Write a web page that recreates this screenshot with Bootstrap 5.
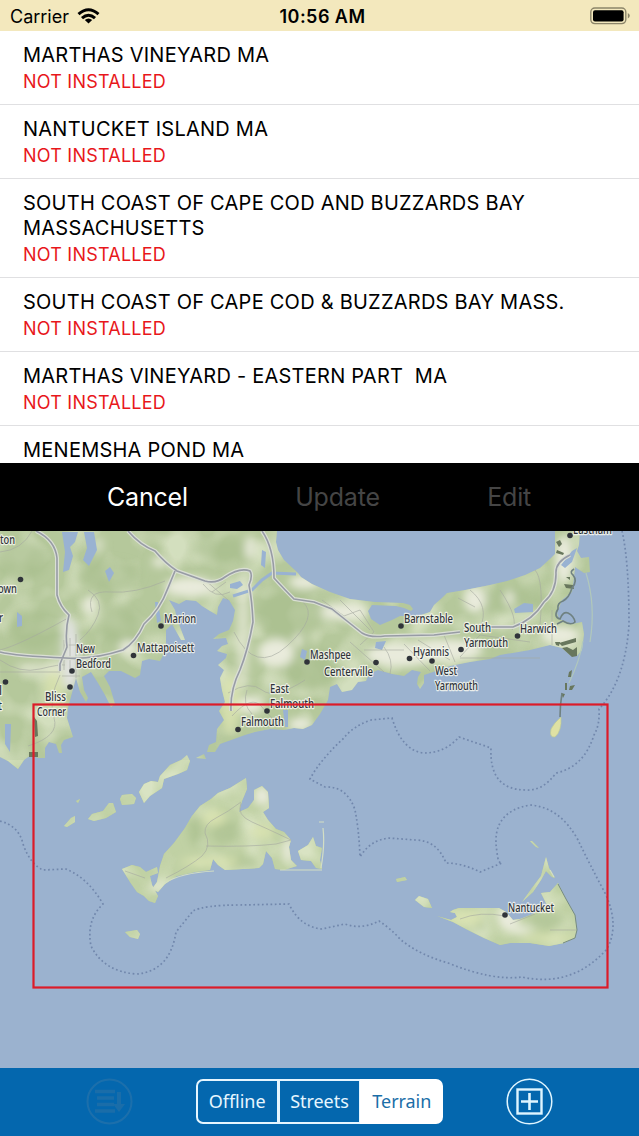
<!DOCTYPE html>
<html lang="en">
<head>
    <meta charset="utf-8">
    <meta name="viewport" content="width=device-width, initial-scale=1">
    <title>Chart Download</title>
    <link href="https://cdn.jsdelivr.net/npm/bootstrap@5.3.3/dist/css/bootstrap.min.css" rel="stylesheet">
    <style>
        body {
            font-family: Inter, "Liberation Sans", sans-serif;
            color: #000;
        }
        .screen {
            width: 639px;
            height: 1136px;
        }
        .status-bar {
            height: 31px;
            background: #f3e8bd;
            font-size: 18px;
            line-height: 31px;
            padding: 1px 8px 0 10px;
        }
        .status-bar > * {
            flex: 1 1 0;
        }
        .clock {
            font-weight: 600;
            letter-spacing: .45px;
            padding-left: 4px;
        }
        .chart-list {
            height: 432px;
        }
        .chart-list .list-group-item {
            padding: 12px 0 9px 23px;
            border-color: #e0e0e2;
            border-width: 0 0 1px;
            color: #000;
            flex-shrink: 0;
        }
        .chart-name {
            font-size: 20px;
            line-height: 25px;
            letter-spacing: .24px;
            white-space: pre;
        }
        .chart-state {
            font-size: 18px;
            line-height: 27px;
            letter-spacing: .22px;
            color: #e8171b;
        }
        .action-bar {
            height: 68px;
            background: #000;
            padding: 2px 108px 0 107px;
        }
        .action-bar .btn {
            font-size: 25px;
            letter-spacing: -.2px;
            border: 0;
            padding: 0;
            color: #fff;
        }
        .action-bar .btn:disabled {
            color: #454545;
            opacity: 1;
        }
        .map-view {
            height: 537px;
            background: #9bb2cf;
        }
        .map-view text {
            font-family: "Noto Sans", sans-serif;
            font-size: 13px;
            font-weight: 500;
            fill: #30343a;
            stroke: #f6f7ef;
            stroke-opacity: .85;
            stroke-width: 2.6px;
            stroke-linejoin: round;
            paint-order: stroke;
        }
        .tool-bar {
            height: 68px;
            background: #0467ae;
            padding: 0 86px 2px;
        }
        .layer-switch {
            width: 248px;
            height: 45px;
        }
        .layer-switch .btn {
            font-family: "Noto Sans", sans-serif;
            font-size: 18px;
            letter-spacing: -.05px;
            padding: 0;
            line-height: 39px;
            color: #e6f6ff;
            border: 2px solid #e6f6ff;
            border-radius: 7px;
            flex: 1 1 0;
        }
        .layer-switch .btn:not(:first-child) {
            margin-left: -2px;
        }
        .layer-switch .btn.active {
            background: #fff;
            border-color: #fff;
            color: #1b6ea8;
        }
    </style>
</head>
<body>
    <div class="screen d-flex flex-column overflow-hidden">
        <!-- Status bar -->
        <div class="status-bar d-flex">
            <div class="d-flex align-items-center">
                <span>Carrier</span>
                <svg class="ms-2" width="23" height="17" viewBox="0 0 23 17">
                    <g fill="none" stroke="#000" stroke-width="3">
                        <path d="M1.5 6.2 Q11.5 -2.6 21.5 6.2"/>
                        <path d="M5 10.2 Q11.5 4.2 18 10.2"/>
                    </g>
                    <path d="M11.5 15.6 L7.8 12.1 Q11.5 9 15.2 12.1 Z"/>
                </svg>
            </div>
            <div class="clock text-center">10:56 AM</div>
            <div class="d-flex justify-content-end align-items-center">
                <svg width="41" height="18" viewBox="0 0 41 18">
                    <rect x=".8" y="1" width="35" height="15.6" rx="4" fill="none" stroke="#8c8569" stroke-width="1.4"/>
                    <rect x="3" y="3.2" width="30.6" height="11.4" rx="2"/>
                    <path d="M37.8 6 q2 1 2 2.8 t-2 2.8z" fill="#8c8569"/>
                </svg>
            </div>
        </div>

        <!-- Chart list -->
        <div class="chart-list list-group list-group-flush overflow-hidden">
            <div class="list-group-item">
                <div class="chart-name">MARTHAS VINEYARD MA</div>
                <div class="chart-state">NOT INSTALLED</div>
            </div>
            <div class="list-group-item">
                <div class="chart-name">NANTUCKET ISLAND MA</div>
                <div class="chart-state">NOT INSTALLED</div>
            </div>
            <div class="list-group-item">
                <div class="chart-name">SOUTH COAST OF CAPE COD AND BUZZARDS BAY<br>MASSACHUSETTS</div>
                <div class="chart-state">NOT INSTALLED</div>
            </div>
            <div class="list-group-item">
                <div class="chart-name">SOUTH COAST OF CAPE COD &amp; BUZZARDS BAY MASS.</div>
                <div class="chart-state">NOT INSTALLED</div>
            </div>
            <div class="list-group-item">
                <div class="chart-name">MARTHAS VINEYARD - EASTERN PART  MA</div>
                <div class="chart-state">NOT INSTALLED</div>
            </div>
            <div class="list-group-item">
                <div class="chart-name">MENEMSHA POND MA</div>
            </div>
        </div>

        <!-- Actions -->
        <div class="action-bar d-flex align-items-center justify-content-between">
            <button type="button" class="btn">Cancel</button>
            <button type="button" class="btn" disabled>Update</button>
            <button type="button" class="btn" disabled>Edit</button>
        </div>

        <!-- Terrain map -->
        <div class="map-view">
            <svg class="d-block" width="639" height="537" viewBox="0 531 639 537">
                <defs>
                    <clipPath id="landClip">
                        <path d="M0 531 H277 L276 542 278 550 284 560 298 573 301 577 312 584 330 592 350 599 375 602 403 603 410 605 413 609 411 611 404 608 396 606 372 605 368 611 371 619 380 625 392 620 400 616 418 616 430 612 434 605 443 597 447 593 465 590 490 585 507 581 525 575 540 568 551 558 555 554 555 531 H580 L579 545 577 551 581 558 589 557 590 572 584 573 575 567 574 578 572 592 562 600 557 613 559 619 572 624 582 622 584 634 582 650 577 656 570 655 562 648 550 645 530 650 500 655 490 659 470 662 450 666 436 671 424 675 424 683 420 689 417 684 418 677 421 672 412 670 404 676 392 674 378 670 369 674 366 681 358 682 352 690 342 692 337 684 330 687 328 700 320 714 312 725 303 729 294 728 284 730 270 729 255 732 245 735 234 739 220 744 215 752 207 752 209 745 216 742 217 729 224 720 219 711 225 702 222 690 220 678 224 670 218 665 226 658 227 654 217 651 222 646 228 644 226 638 213 639 219 634 229 630 233 621 235 610 229 600 223 598 218 607 217 615 210 611 202 606 196 601 186 600 179 604 169 600 175 610 177 619 185 640 181 640 172 624 166 630 166 650 160 661 149 659 142 661 140 675 135 678 121 671 109 671 104 676 110 687 115 704 111 707 105 695 98 683 91 672 82 677 84 690 88 698 86 702 80 692 76 678 73 689 68 708 67 718 73 737 64 740 61 745 62 753 59 753 56 744 49 742 45 748 45 758 38 758 31 755 24 760 18 769 8 761 0 757Z"/>
                        <path d="M246 778 L247 789 242 801 239 812 248 808 254 800 254 790 262 786 268 792 269 808 263 812 268 820 276 829 284 832 291 840 289 847 291 860 297 866 284 870 275 869 272 858 266 851 263 864 259 868 225 870 218 865 213 859 210 870 195 872 177 876 165 884 158 892 152 889 157 882 160 866 164 854 174 843 185 828 192 816 200 806 211 799 218 793 230 788Z"/>
                        <path d="M122 869 L132 865 140 867 146 872 157 867 158 873 150 876 152 885 158 896 155 903 149 901 144 896 137 892 130 882Z"/>
                        <path d="M298 851 L308 845 313 837 316 846 322 848 320 860 322 869 316 868 311 861 301 860Z"/>
                        <path d="M139 792 L144 784 151 781 158 782 160 776 170 765 181 760 187 755 190 761 187 770 178 774 164 779 162 788 150 796 144 803Z M120 799 l2 -4 10 -1 4 4 -2 6 -12 1z M88 819 l4 -5 11 -3 6 -8 4 0 3 9 -10 6 -12 3z M64 826 l7 -8 4 -2 0 6 -8 5z M196 758 l8 -4 2 5z M76 801 l4 -2 -2 4z"/>
                        <path d="M453 910 L459 908 499 908 506 912 513 920 520 919 533 914 547 905 541 893 550 892 558 883 566 899 575 915 577 929 575 938 564 943 549 946 530 943 510 943 500 945 484 938 466 929 453 922 437 916 451 920 457 917 455 913 450 912Z"/>
                        <path d="M546 857 L549 868 555 878 552 877 546 871 541 880 533 892 522 902 532 888 541 876Z M415 900 l4 -4 9 3 4 9 -8 -1z M396 879 l9 -2 2 3 -10 2z M530 841 l2 0 7 7 -3 -1z M125 932 l12 -2 3 4 -2 5 -8 -2z"/>
                    </clipPath>
                    <filter id="soft" x="-30%" y="-30%" width="160%" height="160%"><feGaussianBlur stdDeviation="4"/></filter>
                    <filter id="relief" x="0" y="0" width="100%" height="100%">
                        <feTurbulence type="fractalNoise" baseFrequency=".03" numOctaves="2" seed="8"/>
                        <feColorMatrix values="0 0 0 0 .88  0 0 0 0 .91  0 0 0 0 .75  3 0 0 0 -1.3"/>
                    </filter>
                    <path id="highways" d="M36 531 Q55 540 57 558 V595 Q60 607 69 615 Q65 630 67 647 L60 664 V671 M0 652 Q15 656 66 658 Q92 660 123 650 Q136 642 144 624 Q160 610 168 588 L175 571 M128 531 Q140 545 155 551 Q165 563 177 571 L205 581 Q216 584 225 577 Q240 567 250 571 Q253 576 249 585 Q252 600 253 622 Q248 650 240 670 Q230 690 231 711 M262 531 Q274 548 274 578 Q285 590 294 599 L314 602 332 609 362 633 Q370 638 385 636 L434 635 460 632 M490 627 L513 627 Q533 620 544 602 Q556 592 556 574 Q555 562 570 555"/>
                </defs>

                <g clip-path="url(#landClip)">
                    <rect y="531" width="639" height="537" fill="#b5c89b"/>
                    <rect y="760" width="639" height="308" fill="#c0d1a4"/>
                    <rect y="531" width="639" height="537" filter="url(#relief)" opacity=".5"/>
                    <!-- woodland and bare ground -->
                    <g filter="url(#soft)">
                        <g fill="#a5bc8b" opacity=".6">
                            <ellipse cx="22" cy="560" rx="26" ry="20"/><ellipse cx="110" cy="575" rx="30" ry="14"/>
                            <ellipse cx="35" cy="630" rx="24" ry="20"/><ellipse cx="120" cy="625" rx="22" ry="20"/>
                            <ellipse cx="225" cy="550" rx="30" ry="12"/><ellipse cx="290" cy="615" rx="34" ry="24"/>
                            <ellipse cx="310" cy="668" rx="26" ry="22"/><ellipse cx="510" cy="600" rx="34" ry="13"/>
                            <ellipse cx="226" cy="832" rx="14" ry="12"/><ellipse cx="196" cy="830" rx="8" ry="16"/>
                            <ellipse cx="243" cy="862" rx="14" ry="6"/><ellipse cx="546" cy="920" rx="18" ry="9"/>
                            <ellipse cx="480" cy="926" rx="6" ry="5"/>
                        </g>
                        <g fill="#e9ebdc">
                            <ellipse cx="276" cy="653" rx="18" ry="14"/>
                            <ellipse cx="190" cy="587" rx="26" ry="10"/><ellipse cx="250" cy="548" rx="5" ry="12"/>
                            <ellipse cx="243" cy="630" rx="6" ry="60" opacity=".7"/><ellipse cx="305" cy="582" rx="16" ry="7"/>
                            <ellipse cx="345" cy="612" rx="24" ry="9"/><ellipse cx="400" cy="655" rx="35" ry="12"/>
                            <ellipse cx="445" cy="650" rx="38" ry="11"/><ellipse cx="475" cy="600" rx="11" ry="13"/>
                            <ellipse cx="509" cy="598" rx="4" ry="8"/><ellipse cx="560" cy="635" rx="20" ry="9"/>
                            <ellipse cx="564" cy="560" rx="9" ry="24"/><ellipse cx="250" cy="705" rx="14" ry="9"/>
                            <ellipse cx="300" cy="724" rx="12" ry="6"/><ellipse cx="90" cy="605" rx="7" ry="9"/>
                            <ellipse cx="262" cy="796" rx="8" ry="10"/><ellipse cx="128" cy="648" rx="9" ry="8"/>
                            <ellipse cx="288" cy="850" rx="5" ry="13"/><ellipse cx="156" cy="886" rx="5" ry="5"/>
                            <ellipse cx="508" cy="918" rx="10" ry="12"/><ellipse cx="520" cy="930" rx="11" ry="4"/>
                            <ellipse cx="40" cy="668" rx="26" ry="5" opacity=".7"/><ellipse cx="98" cy="545" rx="6" ry="8" opacity=".6"/>
                            <ellipse cx="160" cy="562" rx="8" ry="5"/><ellipse cx="298" cy="640" rx="4" ry="7"/>
                        </g>
                        <path d="M66 612 L76 626 80 650 76 688 64 688 62 650Z" fill="#e2e3e2"/>
                        <g fill="#dde5b2" opacity=".8">
                            <ellipse cx="464" cy="918" rx="18" ry="8"/><ellipse cx="550" cy="938" rx="30" ry="4"/>
                            <ellipse cx="262" cy="832" rx="12" ry="7"/><ellipse cx="214" cy="818" rx="12" ry="8"/>
                            <ellipse cx="230" cy="704" rx="10" ry="30"/><ellipse cx="54" cy="690" rx="10" ry="20"/>
                            <ellipse cx="210" cy="862" rx="30" ry="5"/>
                        </g>
                    </g>
                </g>

                <!-- ponds and the canal -->
                <g fill="#99b2d2">
                    <path d="M62 532 h16 l-3 10 -5 5 3 9 -4 14 -6 2 2 -20z M84 532 h10 l3 18 -8 16 -6 -6 4 -12z M105 571 l5 -4 4 6 -5 9z M17 612 l5 4 0 10 -5 1z M5 724 l6 0 -1 28 -5 -8z"/>
                    <path d="M262 550 l4 2 -1 16 -4 -3z M302 649 l5 2 -2 9 -5 -3z M514 609 l10 -6 9 1 0 8 -18 1z M283 710 l5 0 0 17 -3 0z M376 642 l10 -1 -4 9 -7 -2z"/>
                    <path d="M155 602 l3 0 3 19 -4 2z M572 551 l5 -3 -5 14 -7 6 -4 -3z M230 584 l10 -3 3 4 -6 4 -7 -1z"/>
                </g>
                <path d="M233 596 L252 590 262 580 272 573 296 574" fill="none" stroke="#99b2d2" stroke-width="3"/>

                <!-- minor roads -->
                <g fill="none" stroke="#a5a8a0" stroke-width=".8" opacity=".75">
                    <path d="M0 660 Q20 674 40 669 T65 665 M0 672 H60 M64 640 V670 M70 638 V674 M76 634 V678 M64 645 H84 V658 H64 M62 676 H80 M80 640 Q92 630 98 615 T88 590 M60 675 Q48 700 54 718 T28 746"/>
                    <path d="M68 618 Q20 645 0 650 M32 531 Q22 550 0 552 M92 612 Q85 590 110 592 T165 581 M205 580 L228 600 M212 592 L226 582 M203 584 Q215 600 230 592"/>
                    <path d="M234 632 Q255 675 287 646 T303 602 M228 693 Q250 680 262 690 T305 680 M232 716 Q252 694 262 707 T282 724 M247 690 Q242 704 252 714 M322 600 L344 616 360 610 374 632 360 645 M340 600 L370 630 M350 642 L384 672 M364 650 H404 M384 647 Q394 660 390 674"/>
                    <path d="M404 644 L430 671 M418 640 L450 660 M444 635 L455 662 M460 658 H540 M460 657 L480 635 530 642 M470 590 Q490 606 480 628 M458 598 L475 607 M500 590 Q520 620 512 630 M535 570 Q544 580 540 625 M552 610 V645"/>
                    <path d="M166 878 Q190 866 202 856 Q212 846 205 833 Q204 824 216 818 T241 802 M206 846 Q250 847 276 844 L291 840 M241 803 Q236 815 252 822 T291 840 M125 871 L145 878 M460 919 Q480 911 505 916 M510 924 Q520 920 535 914 M550 930 H576"/>
                </g>

                <!-- highways -->
                <g fill="none" stroke-linejoin="round">
                    <use href="#highways" stroke="#dadfd4" stroke-width="4"/>
                    <use href="#highways" stroke="#979ba5" stroke-width="1.6"/>
                </g>

                <!-- sandbars and marshes -->
                <g fill="none" stroke="#d3dec4" stroke-width="1.2">
                    <path d="M586 573 Q596 605 590 642 M583 641 Q580 660 569 683" stroke="#b1c8bb"/>
                    <path d="M323 828 Q325 845 321 868 M280 870 H322 M165 883 Q180 873 214 871 M319 822 h5"/>
                    <path d="M550 870 L554 877"/>
                </g>
                <path d="M558 884 L566 899 575 915 577 930 575 938 563 943" fill="none" stroke="#758a84" stroke-width="1"/>
                <g fill="#68775d">
                    <path d="M555 642 l5 0 -1 4 -3 -1z M559 643 l17 -5 0 4 -14 4z M562 648 l5 -1 6 3 4 -3 0 9 -5 1z M556 542 l4 -2 2 4 -3 3z M557 550 l7 3 -1 2 -7 -2z M564 584 l9 1 1 4 -8 -1z M566 577 l4 0 0 3z"/>
                    <path d="M569 672 l3 -2 -1 7 -3 0z M565 683 h2 v7 h-2z M570 686 l5 -1 -3 5 -3 0z M561 693 l4 1 -2 4z M34 717 l3 4 1 15 -3 1z M29 752 h9 v5 h-9z"/>
                </g>
                <path d="M574 569 q-5 3 -1 6 q5 6 -1 13 q-3 10 -9 13 q-6 2 -5 8 q-5 8 2 10 q3 -8 8 -6 q6 3 7 9 q-4 4 -12 -1 l-6 3 M562 693 Q560 705 560 717" fill="none" stroke="#6f8181" stroke-width="1.6"/>
                <path d="M561 717 Q562 731 555 737 Q549 738 551 729 Q554 723 561 717Z" fill="#dfe1a3" stroke="#bac898" stroke-width=".7"/>

                <!-- maritime limits -->
                <g fill="none" stroke="#7187ac" stroke-width="1.7" stroke-dasharray="1.7 2.6">
                    <path d="M0 821 Q19 826 23 844 Q30 864 43 870 L66 869 Q88 878 103 904 Q86 920 91 946 Q104 972 137 974 Q170 971 176 932 L193 911 Q204 905 240 905 L289 904 Q300 927 322 929 L345 924 Q362 930 379 921 Q390 928 401 940 Q420 955 448 963 Q493 981 522 977 Q572 988 607 949 Q620 925 605 893 Q590 865 578 840 Q560 807 530 805 Q490 812 497 852 Q498 864 502 863 L480 872 Q462 863 446 863 Q437 840 415 840 L389 838 Q370 840 360 857 Q359 830 355 810 Q347 786 325 787 L310 779 Q320 760 343 739 Q353 726 371 720 L392 718 Q402 751 424 753 Q445 753 459 737 L491 748 Q489 790 526 790 Q543 791 556 773 Q584 767 594 735 Q600 725 599 709 Q625 681 629 625 Q629 561 622 531"/>
                </g>

                <!-- towns -->
                <g fill="#30343a">
                    <circle cx="20.500" cy="579.500" r="2.800"/><circle cx="5.500" cy="682" r="2.800"/>
                    <circle cx="161" cy="626" r="2.800"/><circle cx="133.500" cy="655.500" r="2.800"/>
                    <circle cx="72" cy="671" r="2.800"/><circle cx="70" cy="687" r="2.800"/>
                    <circle cx="307" cy="662" r="2.800"/><circle cx="376" cy="662.500" r="2.800"/>
                    <circle cx="401" cy="626" r="2.800"/><circle cx="409.500" cy="658.500" r="2.800"/>
                    <circle cx="432" cy="661" r="2.800"/><circle cx="461" cy="649.500" r="2.800"/>
                    <circle cx="517.500" cy="636" r="2.800"/><circle cx="570" cy="535.500" r="2.800"/>
                    <circle cx="267" cy="711" r="2.800"/><circle cx="238" cy="729.500" r="2.800"/>
                    <circle cx="505" cy="915" r="2.800"/>
                </g>
                <g>
                    <text x="0" y="544" textLength="15" lengthAdjust="spacingAndGlyphs">ton</text>
                    <text x="-2" y="593" textLength="19" lengthAdjust="spacingAndGlyphs">own</text>
                    <text x="-1" y="622" textLength="4" lengthAdjust="spacingAndGlyphs">r</text>
                    <text x="-1" y="695" textLength="3" lengthAdjust="spacingAndGlyphs">l</text>
                    <text x="-2" y="710" textLength="4" lengthAdjust="spacingAndGlyphs">t</text>
                    <text x="164" y="623" textLength="32" lengthAdjust="spacingAndGlyphs">Marion</text>
                    <text x="137" y="652" textLength="57" lengthAdjust="spacingAndGlyphs">Mattapoisett</text>
                    <text x="76" y="653" textLength="19" lengthAdjust="spacingAndGlyphs">New</text>
                    <text x="76" y="668" textLength="35" lengthAdjust="spacingAndGlyphs">Bedford</text>
                    <text x="45" y="701" textLength="21" lengthAdjust="spacingAndGlyphs">Bliss</text>
                    <text x="37" y="716" textLength="29" lengthAdjust="spacingAndGlyphs">Corner</text>
                    <text x="310" y="659" textLength="41" lengthAdjust="spacingAndGlyphs">Mashpee</text>
                    <text x="324" y="676" textLength="49" lengthAdjust="spacingAndGlyphs">Centerville</text>
                    <text x="270" y="693" textLength="19" lengthAdjust="spacingAndGlyphs">East</text>
                    <text x="270" y="708" textLength="44" lengthAdjust="spacingAndGlyphs">Falmouth</text>
                    <text x="241" y="726" textLength="43" lengthAdjust="spacingAndGlyphs">Falmouth</text>
                    <text x="404" y="623" textLength="49" lengthAdjust="spacingAndGlyphs">Barnstable</text>
                    <text x="413" y="656" textLength="36" lengthAdjust="spacingAndGlyphs">Hyannis</text>
                    <text x="464" y="632" textLength="27" lengthAdjust="spacingAndGlyphs">South</text>
                    <text x="464" y="647" textLength="44" lengthAdjust="spacingAndGlyphs">Yarmouth</text>
                    <text x="435" y="675" textLength="22" lengthAdjust="spacingAndGlyphs">West</text>
                    <text x="435" y="690" textLength="43" lengthAdjust="spacingAndGlyphs">Yarmouth</text>
                    <text x="520" y="633" textLength="37" lengthAdjust="spacingAndGlyphs">Harwich</text>
                    <text x="573" y="533.500" textLength="39" lengthAdjust="spacingAndGlyphs">Eastham</text>
                    <text x="508" y="912" textLength="46" lengthAdjust="spacingAndGlyphs">Nantucket</text>
                </g>

                <!-- selected chart bounds -->
                <rect x="33.500" y="704.500" width="574" height="283" fill="none" stroke="#dc1b28" stroke-width="2.200"/>
            </svg>
        </div>

        <!-- Bottom toolbar -->
        <div class="tool-bar d-flex align-items-center justify-content-between">
            <svg width="47" height="47" viewBox="0 0 47 47" opacity=".16">
                <circle cx="23.500" cy="23.500" r="22" fill="none" stroke="#9b9ba0" stroke-width="2"/>
                <path d="M9 13.500 H29 M11 20 H28 M11 26.500 H28 M9 33 H29" stroke="#8d8d92" stroke-width="3.500"/>
                <path d="M31 14 h4 v12 h4 l-6 8 -6 -8 h4z" fill="#8d8d92"/>
            </svg>
            <div class="layer-switch btn-group">
                <button type="button" class="btn">Offline</button>
                <button type="button" class="btn">Streets</button>
                <button type="button" class="btn active">Terrain</button>
            </div>
            <svg width="47" height="47" viewBox="0 0 47 47" fill="none" stroke="#dff5ff">
                <circle cx="23.500" cy="23.500" r="22.300" stroke-width="1.500"/>
                <rect x="11.500" y="11.500" width="24" height="24" stroke-width="2.400"/>
                <path d="M23.500 15 V32 M15 23.500 H32" stroke-width="2.600"/>
            </svg>
        </div>
    </div>

    <script src="https://cdn.jsdelivr.net/npm/bootstrap@5.3.3/dist/js/bootstrap.bundle.min.js"></script>
</body>
</html>
